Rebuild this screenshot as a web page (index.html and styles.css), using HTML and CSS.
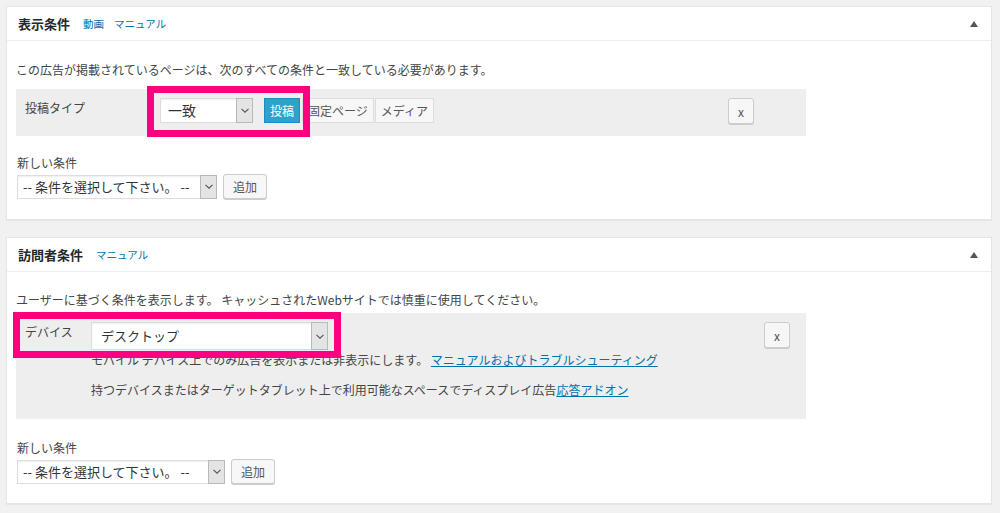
FILE: index.html
```html
<!DOCTYPE html>
<html lang="ja">
<head>
  <meta charset="UTF-8">
  <title>表示条件 / 訪問者条件</title>
  <link rel="stylesheet" href="styles.css">
</head>
<body>

  <div class="postbox">
    <div class="hndle">
      <span class="title">表示条件</span>
      <a href="#" class="hlink">動画</a>
      <a href="#" class="hlink">マニュアル</a>
      <span class="toggle"></span>
    </div>
    <div class="inside">
      <p class="intro">この広告が掲載されているページは、次のすべての条件と一致している必要があります。</p>

      <div class="cond-row">
        <div class="cond-label">投稿タイプ</div>
        <div class="select match">
          <span class="select-text">一致</span>
          <span class="arrow"><svg width="8" height="5" viewBox="0 0 8 5"><path d="M0.5 0.8 L4 4.2 L7.5 0.8" fill="none" stroke="#555" stroke-width="1.1"/></svg></span>
        </div>
        <div class="btn-set">
          <button class="active">投稿</button>
          <button>固定ページ</button>
          <button>メディア</button>
        </div>
        <button class="remove">x</button>
        <div class="highlight hl-type"></div>
      </div>

      <div class="new-cond">
        <div class="new-label">新しい条件</div>
        <div class="new-line">
          <div class="select choose">
            <span class="select-text">-- 条件を選択して下さい。 --</span>
            <span class="arrow"><svg width="8" height="5" viewBox="0 0 8 5"><path d="M0.5 0.8 L4 4.2 L7.5 0.8" fill="none" stroke="#555" stroke-width="1.1"/></svg></span>
          </div>
          <button class="add">追加</button>
        </div>
      </div>
    </div>
  </div>

  <div class="postbox">
    <div class="hndle">
      <span class="title">訪問者条件</span>
      <a href="#" class="hlink">マニュアル</a>
      <span class="toggle"></span>
    </div>
    <div class="inside visitor">
      <p class="intro">ユーザーに基づく条件を表示します。 キャッシュされたWebサイトでは慎重に使用してください。</p>

      <div class="cond-row device">
        <div class="cond-label">デバイス</div>
        <div class="device-body">
          <div class="select wide">
            <span class="select-text">デスクトップ</span>
            <span class="arrow"><svg width="8" height="5" viewBox="0 0 8 5"><path d="M0.5 0.8 L4 4.2 L7.5 0.8" fill="none" stroke="#555" stroke-width="1.1"/></svg></span>
          </div>
          <p class="desc">モバイル デバイス上でのみ広告を表示または非表示にします。 <a href="#">マニュアルおよびトラブルシューティング</a></p>
          <p class="desc">持つデバイスまたはターゲットタブレット上で利用可能なスペースでディスプレイ広告<a href="#">応答アドオン</a></p>
        </div>
        <button class="remove">x</button>
        <div class="highlight hl-device"></div>
      </div>

      <div class="new-cond">
        <div class="new-label">新しい条件</div>
        <div class="new-line">
          <div class="select choose long">
            <span class="select-text">-- 条件を選択して下さい。 --</span>
            <span class="arrow"><svg width="8" height="5" viewBox="0 0 8 5"><path d="M0.5 0.8 L4 4.2 L7.5 0.8" fill="none" stroke="#555" stroke-width="1.1"/></svg></span>
          </div>
          <button class="add">追加</button>
        </div>
      </div>
    </div>
  </div>

</body>
</html>
```

FILE: styles.css
```css
body {
  margin: 0;
  padding: 6px 8px 0 6px;
  background: #f1f1f1;
  color: #444;
  font-family: "Noto Sans CJK JP", "Noto Sans", sans-serif;
  font-size: 12px;
}
button {
  font-family: inherit;
  cursor: pointer;
}
.postbox {
  background: #fff;
  border: 1px solid #e5e5e5;
  box-shadow: 0 1px 1px rgba(0, 0, 0, 0.04);
  margin-bottom: 17px;
}
.hndle {
  display: flex;
  align-items: center;
  height: 33px;
  padding: 0 13px 0 11px;
  border-bottom: 1px solid #eee;
}
.title {
  font-size: 13px;
  font-weight: bold;
  color: #23282d;
  margin-right: 3px;
}
.hlink {
  font-size: 10.5px;
  color: #0073aa;
  text-decoration: none;
  margin-left: 10px;
}
.toggle {
  margin-left: auto;
  width: 0;
  height: 0;
  border-left: 4px solid transparent;
  border-right: 4px solid transparent;
  border-bottom: 6px solid #555;
}
.inside {
  padding: 0 9px 20px;
}
.inside.visitor {
  padding-bottom: 19px;
}
.intro {
  margin: 19px 0 9px;
  line-height: 20px;
}
.visitor .intro {
  margin: 18px 0 3px;
}
.cond-row {
  position: relative;
  width: 790px;
  display: flex;
  align-items: flex-start;
  background: #eee;
  padding: 9px 0 12px;
}
.cond-label {
  width: 135px;
  padding-left: 9px;
  line-height: 20px;
  color: #444;
}
.select {
  display: flex;
  align-items: stretch;
  height: 25px;
  box-sizing: border-box;
  background: #fff;
  border: 1px solid #ddd;
  box-shadow: inset 0 1px 2px rgba(0, 0, 0, 0.07);
}
.select-text {
  flex: 1;
  padding-left: 7px;
  font-size: 13px;
  line-height: 23px;
  color: #333;
  white-space: nowrap;
  overflow: hidden;
}
.arrow {
  width: 15px;
  display: flex;
  align-items: center;
  justify-content: center;
  background: #e4e4e4;
  border: 1px solid #b9b9b9;
  margin: -1px -1px -1px 0;
}
.select.match {
  width: 93px;
}
.select.match .select-text {
  font-size: 14px;
}
.btn-set {
  display: flex;
  margin-left: 11px;
}
.btn-set button {
  height: 25px;
  padding: 0 5px;
  margin-right: 1px;
  font-size: 12px;
  color: #555;
  background: #f7f7f7;
  border: 1px solid #ddd;
}
.btn-set button.active {
  background: #2ea2cc;
  border-color: #1e8cbe;
  color: #fff;
  margin-right: 2px;
}
.remove {
  margin-left: auto;
  margin-right: 52px;
  width: 26px;
  height: 26px;
  padding: 0;
  font-size: 12px;
  color: #555;
  background: #f7f7f7;
  border: 1px solid #ccc;
  border-radius: 3px;
  box-shadow: 0 1px 0 #ccc;
}
.highlight {
  position: absolute;
  box-sizing: border-box;
  border: 7px solid #fc0080;
}
.hl-type {
  left: 131px;
  top: -3px;
  width: 163px;
  height: 51px;
}
.cond-row.device {
  padding: 9px 0 19px;
}
.device .cond-label {
  width: 66px;
}
.device-body {
  flex: 1;
}
.select.wide {
  width: 237px;
  height: 28px;
}
.select.wide .select-text {
  line-height: 26px;
  padding-left: 9px;
}
.desc {
  margin: 0;
  line-height: 20px;
}
.desc + .desc {
  margin-top: 10px;
}
.desc a {
  color: #0073aa;
}
.device .remove {
  margin-right: 16px;
}
.hl-device {
  left: -3px;
  top: -1px;
  width: 328px;
  height: 46px;
}
.new-cond {
  margin-top: 18px;
}
.visitor .new-cond {
  margin-top: 20px;
}
.new-label {
  font-size: 12px;
  line-height: 18px;
  margin-left: 1px;
}
.new-line {
  display: flex;
  align-items: center;
  margin-top: 2px;
  margin-left: 1px;
}
.select.choose {
  width: 200px;
  height: 24px;
}
.select.choose .select-text {
  line-height: 22px;
  padding-left: 5px;
}
.select.choose.long {
  width: 208px;
}
.add {
  height: 25px;
  margin-left: 6px;
  padding: 0 9px;
  font-size: 12px;
  color: #555;
  background: #f7f7f7;
  border: 1px solid #ccc;
  border-radius: 3px;
  box-shadow: 0 1px 0 #ccc;
}
```
